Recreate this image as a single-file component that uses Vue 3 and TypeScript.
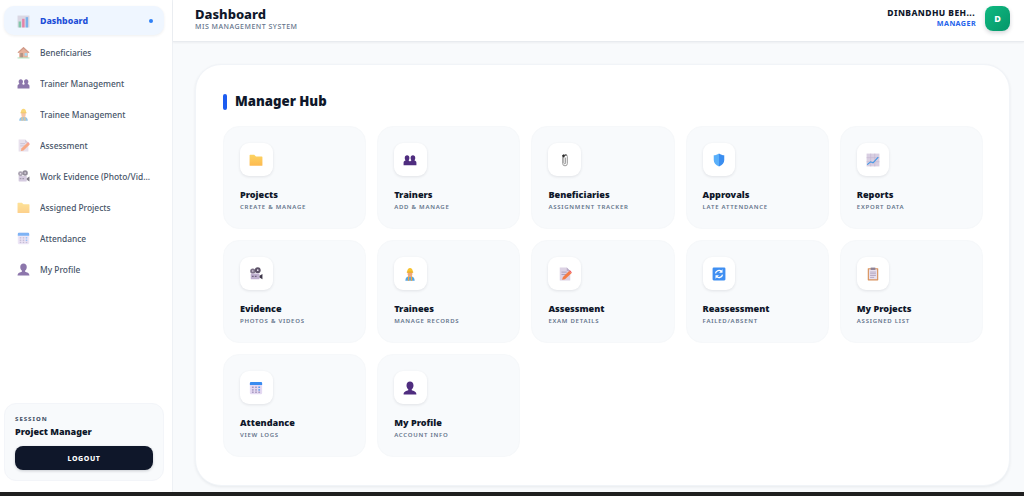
<script setup lang="ts">
interface NavItem { label: string; icon: string; active?: boolean }
interface Card { title: string; sub: string; icon: string }

const nav: NavItem[] = [
  { label: 'Dashboard', icon: 'chart', active: true },
  { label: 'Beneficiaries', icon: 'house' },
  { label: 'Trainer Management', icon: 'people' },
  { label: 'Trainee Management', icon: 'worker' },
  { label: 'Assessment', icon: 'memo' },
  { label: 'Work Evidence (Photo/Video)', icon: 'camera' },
  { label: 'Assigned Projects', icon: 'folder' },
  { label: 'Attendance', icon: 'calendar' },
  { label: 'My Profile', icon: 'person' }
]

const cards: Card[] = [
  { title: 'Projects', sub: 'Create & Manage', icon: 'folder' },
  { title: 'Trainers', sub: 'Add & Manage', icon: 'people' },
  { title: 'Beneficiaries', sub: 'Assignment Tracker', icon: 'clip' },
  { title: 'Approvals', sub: 'Late Attendance', icon: 'shield' },
  { title: 'Reports', sub: 'Export Data', icon: 'trend' },
  { title: 'Evidence', sub: 'Photos & Videos', icon: 'camera' },
  { title: 'Trainees', sub: 'Manage Records', icon: 'worker' },
  { title: 'Assessment', sub: 'Exam Details', icon: 'memo' },
  { title: 'Reassessment', sub: 'Failed/Absent', icon: 'refresh' },
  { title: 'My Projects', sub: 'Assigned List', icon: 'clipboard' },
  { title: 'Attendance', sub: 'View Logs', icon: 'calendar' },
  { title: 'My Profile', sub: 'Account Info', icon: 'person' }
]
</script>

<template>
  <svg class="defs" aria-hidden="true" width="0" height="0">
    <defs>
      <linearGradient id="gFolder" x1="0" y1="0" x2="0" y2="1">
        <stop offset="0" stop-color="#fcd462" />
        <stop offset="1" stop-color="#fdb950" />
      </linearGradient>
      <symbol id="chart" viewBox="0 0 24 24">
        <rect x="1" y="1" width="22" height="22" fill="#cfc8d6" />
        <rect x="3" y="12" width="4.5" height="11" fill="#4caf7d" />
        <rect x="9.5" y="7" width="4.5" height="16" fill="#e0457b" />
        <rect x="16" y="4" width="4.5" height="19" fill="#3f8fe0" />
      </symbol>
      <symbol id="house" viewBox="0 0 24 24">
        <path d="M12 2 23 12h-3v10H4V12H1z" fill="#d98a6a" />
        <path d="M12 2 23 12l-1.500 1L12 5 2.500 13 1 12z" fill="#b7654a" />
        <rect x="6" y="13" width="5" height="9" fill="#8a5a44" />
        <rect x="14" y="13" width="5" height="5" fill="#7cc6ea" />
        <rect x="1" y="21" width="22" height="2" fill="#8fd6a2" />
      </symbol>
      <symbol id="people" viewBox="0 0 24 24">
        <path d="M7 4c2.500 0 4 2 4 4.500S9.500 13 9.500 13c1 .5 2 1 2.500 1.500.5-.5 1.500-1 2.500-1.500 0 0-1.500-2-1.500-4.500S14.500 4 17 4s4 2 4 4.500-1.500 4.500-1.500 4.500c2 .5 3.500 1.500 3.500 3.500v4.500H1v-4.500C1 14.500 2.500 13.500 4.500 13 4.500 13 3 11 3 8.500S4.500 4 7 4z" fill="#4f2d7f" />
      </symbol>
      <symbol id="worker" viewBox="0 0 24 24">
        <path d="M4 23.500c0-5 3-7.500 8-7.500s8 2.500 8 7.500z" fill="#58a6e0" />
        <path d="M8.500 16h2v7.500h-2zM13.500 16h2v7.500h-2z" fill="#f5a43c" />
        <path d="M8 9h8v4a4 4 0 0 1-8 0z" fill="#f2a878" />
        <path d="M7 9c0-10 10-10 10 0z" fill="#f7c231" />
        <rect x="6.500" y="8" width="11" height="1.800" fill="#e8a920" />
      </symbol>
      <symbol id="memo" viewBox="0 0 24 24">
        <path d="M3 1h12l6 6v16H3z" fill="#dcd2e4" />
        <path d="M15 1l6 6h-6z" fill="#b9acc6" />
        <rect x="6" y="8" width="9" height="1.500" fill="#a99ab8" />
        <rect x="6" y="12" width="8" height="1.500" fill="#a99ab8" />
        <path d="M7 22l1.500-5L19 7l4 3.500L12 21z" fill="#f47b45" />
        <path d="M19 7l1.500-1.500 3 3.500-.5 1.500z" fill="#ef4f5c" />
      </symbol>
      <symbol id="camera" viewBox="0 0 24 24">
        <circle cx="6.500" cy="7" r="4.500" fill="#7d7288" />
        <circle cx="15" cy="5.500" r="5" fill="#5c5268" />
        <circle cx="6.500" cy="7" r="1.300" fill="#e5dcec" />
        <circle cx="15" cy="5.500" r="1.500" fill="#e5dcec" />
        <rect x="3" y="11" width="15" height="10" rx="1" fill="#bfb0d0" />
        <rect x="5" y="15" width="3" height="2" fill="#6a5f78" />
        <rect x="10" y="15" width="3" height="2" fill="#6a5f78" />
        <path d="M18 15l5-3v9l-5-3z" fill="#3d3548" />
      </symbol>
      <symbol id="folder" viewBox="0 0 24 24">
        <path d="M1 4a1 1 0 0 1 1-1h7l3 3h10a1 1 0 0 1 1 1v14a1 1 0 0 1-1 1H2a1 1 0 0 1-1-1z" fill="url(#gFolder)" />
      </symbol>
      <symbol id="calendar" viewBox="0 0 24 24">
        <rect x="1.500" y="1.500" width="21" height="21" rx="2" fill="#e4d9f2" />
        <path d="M1.500 7V3.500a2 2 0 0 1 2-2h17a2 2 0 0 1 2 2V7z" fill="#3a8cf0" />
        <g fill="#a89ac0">
          <rect x="5" y="9.500" width="3" height="2.500" />
          <rect x="10.500" y="9.500" width="3" height="2.500" />
          <rect x="5" y="14" width="3" height="2.500" />
          <rect x="10.500" y="14" width="3" height="2.500" />
          <rect x="5" y="18" width="3" height="2.500" />
          <rect x="10.500" y="18" width="3" height="2.500" />
        </g>
        <g fill="#5a9cf2">
          <rect x="16" y="9.500" width="3" height="2.500" />
          <rect x="16" y="14" width="3" height="2.500" />
        </g>
        <rect x="16" y="18" width="3" height="2.500" fill="#a89ac0" />
      </symbol>
      <symbol id="person" viewBox="0 0 24 24">
        <path d="M12 1c3.500 0 6 2.500 6 6.500 0 3-1.500 5.500-3 6.500v2c3 1 8 2 8 7H1c0-5 5-6 8-7v-2c-1.500-1-3-3.500-3-6.500C6 3.500 8.500 1 12 1z" fill="#4f2d7f" />
      </symbol>
      <symbol id="clip" viewBox="0 0 24 24">
        <path d="M8 8v10a4 4 0 0 0 8 0V6a3 3 0 0 0-6 0v11a1.500 1.500 0 0 0 3 0V8" fill="none" stroke="#8d8d8d" stroke-width="1.500" />
        <path d="M7 4l3-2 2 2-1 3-3 1zM12 3l2-1 1 2-2 1z" fill="#2c2c2c" />
      </symbol>
      <symbol id="shield" viewBox="0 0 24 24">
        <path d="M12 1c3 2 6 3 9 3v8c0 5-3 9-9 11z" fill="#3b8ef0" />
        <path d="M12 1C9 3 6 4 3 4v8c0 5 3 9 9 11z" fill="#5ab0fa" />
      </symbol>
      <symbol id="trend" viewBox="0 0 24 24">
        <rect x="1" y="1" width="22" height="22" fill="#d9cfe2" />
        <path d="M1 8h22M1 15h22M8 1v22M15 1v22" stroke="#c2b5cf" stroke-width="1" />
        <path d="M2 20l6-5 4 2 9-10" fill="none" stroke="#3f97e6" stroke-width="1.800" />
      </symbol>
      <symbol id="refresh" viewBox="0 0 24 24">
        <rect x="1" y="1" width="22" height="22" rx="2" fill="#3f8ff2" />
        <path d="M6 11a6 6 0 0 1 10.500-3M18 13a6 6 0 0 1-10.500 3" fill="none" stroke="#fff" stroke-width="2.200" />
        <path d="M18 4v6h-6zM6 20v-6h6z" fill="#fff" />
      </symbol>
      <symbol id="clipboard" viewBox="0 0 24 24">
        <rect x="3" y="2" width="18" height="21" rx="1" fill="#d9925c" />
        <rect x="5" y="4" width="14" height="17" fill="#e8e0ee" />
        <rect x="8" y="1" width="8" height="4" fill="#8c8296" />
        <g fill="#a99ab8">
          <rect x="7" y="8" width="10" height="1.300" />
          <rect x="7" y="11" width="10" height="1.300" />
          <rect x="7" y="14" width="10" height="1.300" />
          <rect x="7" y="17" width="7" height="1.300" />
        </g>
      </symbol>
    </defs>
  </svg>

  <div class="shell">
    <aside class="sidebar">
      <nav class="nav">
        <a v-for="item in nav" :key="item.label" class="nav-item" :class="{ active: item.active }">
          <svg class="nav-icon"><use :href="'#' + item.icon" /></svg>
          <span class="nav-label">{{ item.label }}</span>
          <span v-if="item.active" class="dot"></span>
        </a>
      </nav>
      <div class="session">
        <div class="session-tag">SESSION</div>
        <div class="session-name">Project Manager</div>
        <button class="logout">LOGOUT</button>
      </div>
    </aside>

    <div class="main">
      <header class="topbar">
        <div class="heading">
          <h1>Dashboard</h1>
          <p>MIS MANAGEMENT SYSTEM</p>
        </div>
        <div class="user">
          <div class="user-text">
            <div class="user-name">DINBANDHU BEH...</div>
            <div class="user-role">MANAGER</div>
          </div>
          <div class="avatar">D</div>
        </div>
      </header>

      <section class="content">
        <div class="panel">
          <h2 class="hub-title"><span class="bar"></span>Manager Hub</h2>
          <div class="grid">
            <div v-for="card in cards" :key="card.title + card.sub" class="card">
              <div class="icon-box"><svg class="card-icon"><use :href="'#' + card.icon" /></svg></div>
              <div class="card-title">{{ card.title }}</div>
              <div class="card-sub">{{ card.sub }}</div>
            </div>
          </div>
        </div>
      </section>
    </div>
  </div>
</template>

<style>
html, body { margin: 0; background: #1f1f1f; }
</style>

<style scoped>
.defs { position: absolute; width: 0; height: 0; }
.shell {
  display: flex;
  height: 492px;
  width: 1024px;
  overflow: hidden;
  background: #f8fafc;
  font-family: "Noto Sans", sans-serif;
  color: #0f172a;
}
.sidebar {
  box-sizing: border-box;
  width: 173px;
  flex: none;
  background: #fff;
  border-right: 1px solid #eef1f5;
  display: flex;
  flex-direction: column;
  justify-content: space-between;
  padding: 6px 8px 11px 4px;
}
.nav { display: flex; flex-direction: column; gap: 2px; }
.nav-item {
  height: 29px;
  box-sizing: border-box;
  display: flex;
  align-items: center;
  padding: 1px 11px 0 13px;
  border-radius: 10px;
  color: #475569;
  font-size: 8.4px;
  font-weight: 500;
}
.nav-item.active {
  background: #eff6ff;
  color: #1d4ed8;
  font-size: 8.8px;
  font-weight: 800;
  box-shadow: 0 1px 3px rgba(15, 23, 42, .07);
}
.nav-icon { width: 13px; height: 13px; flex: none; margin-right: 10px; opacity: .65; }
.nav-label { flex: 1; min-width: 0; white-space: nowrap; overflow: hidden; text-overflow: ellipsis; }
.dot { width: 4.5px; height: 4.5px; border-radius: 50%; background: #2f80f6; flex: none; }
.session {
  background: #f8fafc;
  border: 1px solid #f3f5f9;
  border-radius: 12px;
  height: 78px;
  box-sizing: border-box;
  padding: 11px 10px 0;
  display: flex;
  flex-direction: column;
}
.session-tag { font-size: 6px; font-weight: 800; letter-spacing: 1px; color: #475569; line-height: 9px; }
.session-name { font-size: 9px; font-weight: 900; line-height: 12px; margin-top: 2px; }
.logout {
  margin-top: 8px;
  height: 24px;
  border: 0;
  border-radius: 8px;
  background: #0f172a;
  color: #fff;
  font: 800 7px "Noto Sans", sans-serif;
  letter-spacing: .6px;
  box-shadow: 0 1px 3px rgba(15, 23, 42, .2);
}
.main { flex: 1; min-width: 0; display: flex; flex-direction: column; }
.topbar {
  height: 42px;
  flex: none;
  box-sizing: border-box;
  background: #fff;
  border-bottom: 1px solid #e8ebef;
  box-shadow: 0 1px 2px rgba(15, 23, 42, .05);
  display: flex;
  justify-content: space-between;
  align-items: center;
  padding: 0 14px 0 22px;
}
.heading { margin-bottom: 4px; }
.heading h1 { margin: 0; font-size: 13px; font-weight: 800; line-height: 15px; }
.heading p { margin: 0; font-size: 7px; letter-spacing: .5px; line-height: 9px; color: #64748b; font-weight: 500; }
.user { display: flex; align-items: center; gap: 9px; margin-bottom: 5px; }
.user-text { text-align: right; }
.user-name { font-size: 8.5px; font-weight: 800; letter-spacing: .42px; line-height: 10px; padding-right: 1px; }
.user-role { font-size: 7.2px; font-weight: 700; letter-spacing: .4px; line-height: 10px; color: #2563eb; }
.avatar {
  width: 25px;
  height: 25px;
  border-radius: 8px;
  background: linear-gradient(135deg, #10b981, #059669);
  color: #fff;
  font-size: 9px;
  font-weight: 800;
  display: flex;
  align-items: center;
  justify-content: center;
  box-shadow: 0 2px 4px rgba(15, 23, 42, .18);
}
.content { flex: 1; min-height: 0; padding: 22px 14px 6px 22px; }
.panel {
  box-sizing: border-box;
  height: 422px;
  background: #fff;
  border: 1px solid #f1f4f8;
  border-radius: 26px;
  padding: 28px 26px 0 27px;
  box-shadow: 0 1px 3px rgba(15, 23, 42, .07);
}
.hub-title {
  margin: 0 0 16px;
  height: 17px;
  display: flex;
  align-items: center;
  gap: 8px;
  font-size: 13.2px;
  font-weight: 900;
  line-height: 17px;
}
.bar { width: 4px; height: 16px; border-radius: 2px; background: #1d5cf0; }
.grid { display: grid; grid-template-columns: repeat(5, 1fr); gap: 11px; }
.card {
  box-sizing: border-box;
  height: 103px;
  background: #f8fafc;
  border: 1px solid #f6f8fa;
  border-radius: 16px;
  padding: 16px 16px 0;
}
.icon-box {
  width: 32.5px;
  height: 33px;
  border-radius: 9px;
  background: #fff;
  box-shadow: 0 1px 3px rgba(15, 23, 42, .1);
  display: flex;
  align-items: center;
  justify-content: center;
  margin-bottom: 12px;
}
.card-icon { width: 14px; height: 14px; }
.card-title { font-size: 9.1px; font-weight: 900; line-height: 13px; }
.card-sub { margin-top: 2px; font-size: 6px; font-weight: 600; letter-spacing: .75px; text-transform: uppercase; color: #64748b; line-height: 9px; }
</style>
